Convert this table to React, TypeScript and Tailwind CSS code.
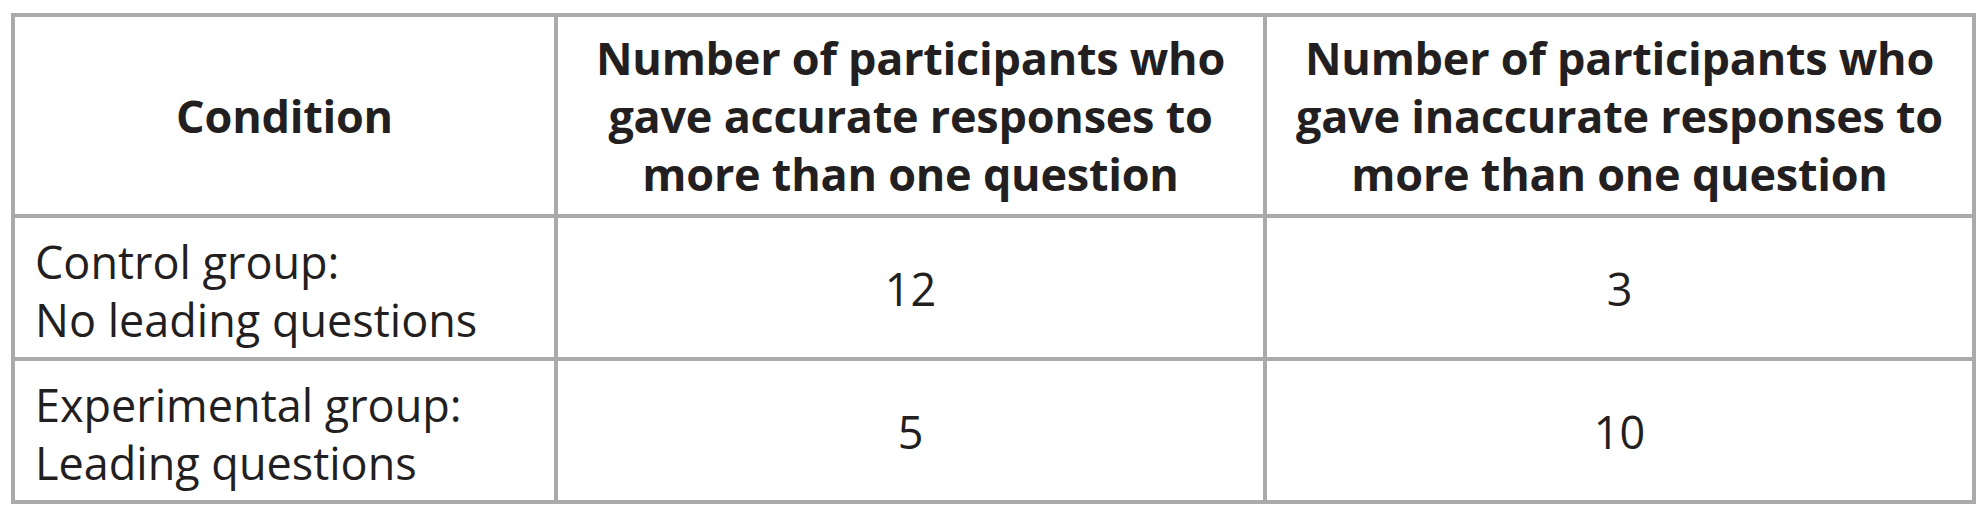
import React from "react";

const font = { fontFamily: '"Open Sans", "Noto Sans", sans-serif' };

export default function App() {
  return (
    <div className="w-[1986px] h-[515px] bg-white pl-[11px] pt-[13px] text-[#231f20]" style={font}>
      <div className="grid w-[1965px] grid-cols-[539px_705px_705px] grid-rows-[197px_139px_139px] gap-[4px] bg-[#aaaaaa] p-[4px]">
        <div className="flex items-center justify-center bg-white text-center text-[45px] font-bold leading-[58px] tracking-[-0.25px]">
          Condition
        </div>
        <div className="flex items-center justify-center bg-white text-center text-[45px] font-bold leading-[58px] tracking-[-0.25px]">
          <span>
            Number of participants who
            <br />
            gave accurate responses to
            <br />
            more than one question
          </span>
        </div>
        <div className="flex items-center justify-center bg-white text-center text-[45px] font-bold leading-[58px] tracking-[-0.25px]">
          <span>
            Number of participants who
            <br />
            gave inaccurate responses to
            <br />
            more than one question
          </span>
        </div>

        <div className="flex items-center bg-white pl-[20px] pt-[7px] text-[45px] leading-[58px]">
          <span>
            Control group:
            <br />
            No leading questions
          </span>
        </div>
        <div className="flex items-center justify-center bg-white pt-[2px] text-[45px] leading-[58px]">12</div>
        <div className="flex items-center justify-center bg-white pt-[2px] text-[45px] leading-[58px]">3</div>

        <div className="flex items-center bg-white pl-[20px] pt-[7px] text-[45px] leading-[58px]">
          <span>
            Experimental group:
            <br />
            Leading questions
          </span>
        </div>
        <div className="flex items-center justify-center bg-white pt-[2px] text-[45px] leading-[58px]">5</div>
        <div className="flex items-center justify-center bg-white pt-[2px] text-[45px] leading-[58px]">10</div>
      </div>
    </div>
  );
}
